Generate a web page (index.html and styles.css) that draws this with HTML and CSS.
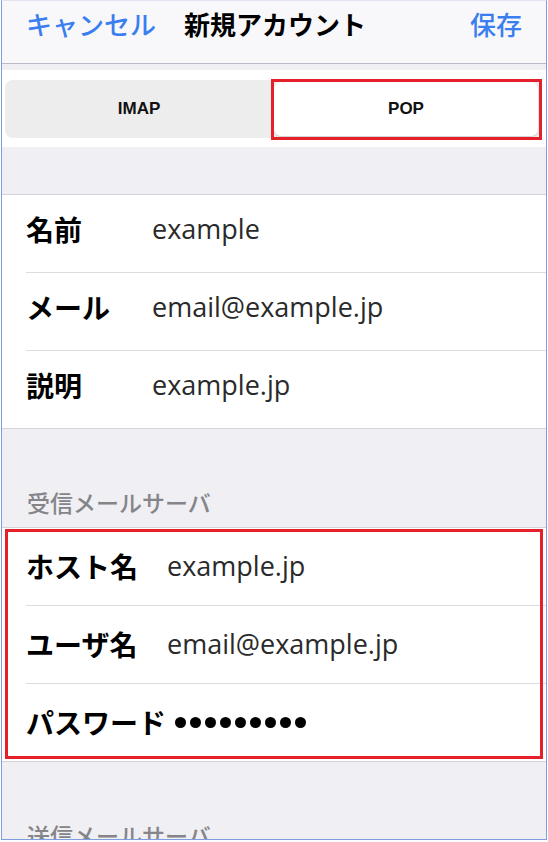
FILE: index.html
```html
<!DOCTYPE html>
<html lang="ja">
<head>
<meta charset="utf-8">
<title>新規アカウント</title>
<link rel="stylesheet" href="styles.css">
</head>
<body>
<div class="frame">
  <header class="nav">
    <span class="nav-btn">キャンセル</span>
    <span class="nav-title">新規アカウント</span>
    <span class="nav-btn nav-save">保存</span>
  </header>
  <div class="gap-top"></div>
  <div class="seg-band">
    <div class="seg">
      <div class="seg-item">IMAP</div>
      <div class="seg-item seg-active marked">POP</div>
    </div>
  </div>
  <div class="gap-mid"></div>
  <section class="group g1">
    <div class="row"><span class="label">名前</span><span class="value">example</span></div>
    <div class="row"><span class="label">メール</span><span class="value">email@example.jp</span></div>
    <div class="row"><span class="label">説明</span><span class="value">example.jp</span></div>
  </section>
  <div class="section-head">受信メールサーバ</div>
  <section class="group g2 marked-box">
    <div class="row"><span class="label">ホスト名</span><span class="value">example.jp</span></div>
    <div class="row"><span class="label">ユーザ名</span><span class="value">email@example.jp</span></div>
    <div class="row"><span class="label">パスワード</span><span class="dots"><i></i><i></i><i></i><i></i><i></i><i></i><i></i><i></i><i></i></span></div>
  </section>
  <div class="section-head">送信メールサーバ</div>
</div>
</body>
</html>
```
FILE: styles.css
```css
* { box-sizing: border-box; }
html, body { margin: 0; padding: 0; background: #ffffff; }
body {
  font-family: "Noto Sans CJK JP", "Noto Sans", sans-serif;
  color: #000;
}
.frame {
  margin-left: 1px;
  width: 546px;
  height: 840px;
  border: 1px solid #7e9ddf;
  border-top-color: #dfe4f0;
  background: #efeff4;
  overflow: hidden;
}
.nav {
  height: 63px;
  background: #f8f8fa;
  border-bottom: 1px solid #b9bcc6;
  display: flex;
  align-items: flex-start;
  padding: 8px 24px 0 24px;
  line-height: 30px;
}
.nav-btn {
  font-size: 26px;
  font-weight: 500;
  color: #3a7ef0;
}
.nav-title {
  font-size: 26px;
  font-weight: 700;
  margin-left: 28px;
  color: #000;
}
.nav-save { margin-left: auto; }
.gap-top { height: 6px; }
.seg-band {
  background: #fff;
  height: 77px;
  padding: 10px 4px 0 3px;
}
.seg {
  height: 58px;
  background: #ededee;
  border-radius: 8px;
  padding: 2px 4px 2px 2px;
  display: grid;
  grid-template-columns: 1fr 1fr;
  column-gap: 3px;
}
.seg-item {
  display: flex;
  align-items: center;
  justify-content: center;
  font-family: "Liberation Sans", Arial, sans-serif;
  font-weight: 700;
  font-size: 17px;
  color: #111;
}
.seg-active {
  background: #fff;
  border-radius: 7px;
  box-shadow: 0 1px 2px rgba(0,0,0,0.14);
}
.marked { position: relative; }
.marked::after {
  content: "";
  position: absolute;
  top: -3px; left: -3px; right: -4px; bottom: -4px;
  border: 3px solid #e5202b;
}
.gap-mid { height: 47px; }
.group {
  background: #fff;
  border-top: 1px solid #d3d3d8;
  border-bottom: 1px solid #d3d3d8;
}
.row {
  margin-left: 24px;
  height: 78px;
  border-bottom: 1px solid #dcdce0;
  display: flex;
  align-items: center;
}
.row:last-child { border-bottom: none; height: 77px; }
.label {
  font-size: 28px;
  font-weight: 700;
  color: #000;
  flex: none;
  line-height: 1.2;
}
.g1 .label { width: 126px; }
.g1 .row { padding-bottom: 8px; }
.g2 .label { width: 141px; }
.value {
  font-family: "Open Sans", "Liberation Sans", sans-serif;
  font-size: 27px;
  color: #2a2a2a;
  line-height: 1.2;
}
.dots {
  display: flex;
  gap: 4px;
  margin-left: 8px;
}
.dots i {
  width: 11px;
  height: 11px;
  border-radius: 50%;
  background: #000;
}
.section-head {
  height: 98px;
  display: flex;
  align-items: flex-end;
  padding: 0 0 10px 25px;
  font-size: 23px;
  font-weight: 500;
  line-height: 30px;
  color: #858589;
}
.marked-box { position: relative; }
.marked-box::after {
  content: "";
  position: absolute;
  top: 1px; left: 3px; right: 3px; bottom: 2px;
  border: 3px solid #e5202b;
  pointer-events: none;
}
```
